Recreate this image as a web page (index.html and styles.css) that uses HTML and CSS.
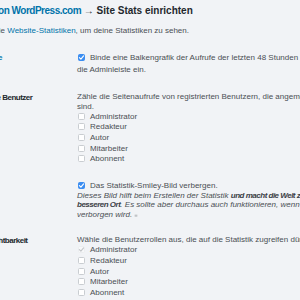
FILE: index.html
```html
<!DOCTYPE html>
<html lang="de">
<head>
    <meta charset="UTF-8">
    <meta name="viewport" content="width=device-width, initial-scale=1.0">
    <title>Site Stats einrichten</title>
    <link rel="stylesheet" href="styles.css">
</head>
<body>
    <div class="wrap">
        <h1 class="title"><a href="#">Jetpack von WordPress.com</a> → Site Stats einrichten</h1>
        <p class="intro">Besuche die <a href="#">Website-Statistiken</a>, um deine Statistiken zu sehen.</p>

        <div class="form-table">
            <div class="row">
                <div class="th th-link">Adminleiste</div>
                <div class="td">
                    <label class="check-inline"><span class="box on"><svg viewBox="0 0 8 8"><path d="M1.6 4.2 L3.3 5.8 L6.4 2.2" /></svg></span>Binde eine Balkengrafik der Aufrufe der letzten 48 Stunden in die Adminleiste ein.</label>
                </div>
            </div>

            <div class="row">
                <div class="th">Registrierte Benutzer</div>
                <div class="td">
                    <p class="desc">Zähle die Seitenaufrufe von registrierten Benutzern, die angemeldet sind.</p>
                    <label class="check"><span class="box"></span>Administrator</label>
                    <label class="check"><span class="box"></span>Redakteur</label>
                    <label class="check"><span class="box"></span>Autor</label>
                    <label class="check"><span class="box"></span>Mitarbeiter</label>
                    <label class="check"><span class="box"></span>Abonnent</label>
                </div>
            </div>

            <div class="row">
                <div class="th">Smiley</div>
                <div class="td">
                    <label class="check"><span class="box on"><svg viewBox="0 0 8 8"><path d="M1.6 4.2 L3.3 5.8 L6.4 2.2" /></svg></span>Das Statistik-Smiley-Bild verbergen.</label>
                    <p class="desc note">Dieses Bild hilft beim Erstellen der Statistik <strong>und macht die Welt zu einem besseren Ort</strong>. Es sollte aber durchaus auch funktionieren, wenn es verborgen wird. <svg class="smiley" viewBox="0 0 6 4"><path d="M1 1.5 H5 M1 3 H5" /></svg></p>
                </div>
            </div>

            <div class="row">
                <div class="th">Statistiksichtbarkeit</div>
                <div class="td">
                    <p class="desc">Wähle die Benutzerrollen aus, die auf die Statistik zugreifen dürfen.</p>
                    <label class="check disabled"><span class="box on"><svg viewBox="0 0 8 8"><path d="M1.6 4.2 L3.3 5.8 L6.4 2.2" /></svg></span>Administrator</label>
                    <label class="check"><span class="box"></span>Redakteur</label>
                    <label class="check"><span class="box"></span>Autor</label>
                    <label class="check"><span class="box"></span>Mitarbeiter</label>
                    <label class="check"><span class="box"></span>Abonnent</label>
                </div>
            </div>
        </div>
    </div>
</body>
</html>
```

FILE: styles.css
```css
html, body {
    overflow: hidden;
}
body {
    margin: 0;
    background-color: #f1f3f6;
    font-family: "Liberation Sans", Arial, sans-serif;
    font-size: 8px;
    color: #4a4f54;
}
a {
    color: #0073aa;
    text-decoration: none;
}
/* page is scrolled sideways, left edge cut off */
.wrap {
    margin-left: -43px;
    padding-top: 4px;
    width: 400px;
}
.title {
    margin: 0;
    font-size: 10px;
    line-height: 13px;
    font-weight: bold;
    color: #23282d;
}
.title a {
    letter-spacing: -0.5px;
}
.intro {
    margin: 9px 0 0;
    padding-left: 4px;
    line-height: 10px;
}
.form-table {
    margin-top: 8px;
}
.row {
    display: grid;
    grid-template-columns: 120px 254px;
    padding: 8px 0;
}
.th {
    padding-left: 5px;
    font-weight: bold;
    letter-spacing: -0.5px;
    color: #23282d;
    line-height: 11px;
}
.th-link {
    color: #0073aa;
}
.desc {
    margin: 0;
    line-height: 9.5px;
}
.note {
    font-style: italic;
}
.note strong {
    letter-spacing: -0.5px;
    color: #3c4147;
}
.check-inline {
    display: block;
    max-width: 236px;
    line-height: 12px;
}
.check {
    display: flex;
    align-items: center;
    height: 10.6px;
}
.box {
    display: inline-block;
    box-sizing: border-box;
    width: 7px;
    height: 7px;
    margin: 0 5px 0 1px;
    border: 1px solid #c9cdd1;
    border-radius: 1.5px;
    background-color: #fff;
    vertical-align: -1px;
}
.box svg {
    display: block;
    width: 7px;
    height: 7px;
    margin: -1px;
}
.box svg path {
    fill: none;
    stroke: #fff;
    stroke-width: 1.3;
    stroke-linecap: round;
    stroke-linejoin: round;
}
.box.on {
    border-color: #3b8df1;
    background-color: #3b8df1;
}
.disabled .box.on {
    border-color: #eceef0;
    background-color: #f7f8f9;
}
.disabled .box svg path {
    stroke: #c4c7ca;
}
.smiley {
    width: 4px;
    height: 3px;
    vertical-align: 0;
}
.smiley path {
    stroke: #8a8f94;
    stroke-width: 0.8;
}
```
